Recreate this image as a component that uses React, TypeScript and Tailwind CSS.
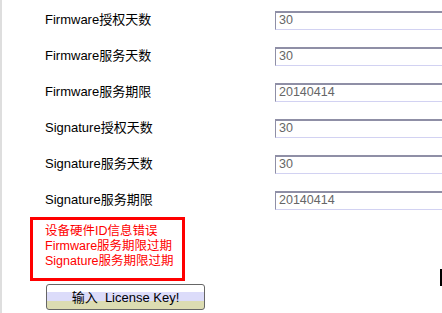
import React from "react";

const rows = [
  { label: "Firmware授权天数", value: "30" },
  { label: "Firmware服务天数", value: "30" },
  { label: "Firmware服务期限", value: "20140414" },
  { label: "Signature授权天数", value: "30" },
  { label: "Signature服务天数", value: "30" },
  { label: "Signature服务期限", value: "20140414" },
];

const errors = ["设备硬件ID信息错误", "Firmware服务期限过期", "Signature服务期限过期"];

const font = { fontFamily: '"Liberation Sans", Arial, "Noto Sans CJK SC", sans-serif' };

export default function App() {
  return (
    <div
      className="relative w-[442px] h-[313px] overflow-hidden bg-white border-l-2 border-[#dedede]"
      style={font}
    >
      <div className="pt-[2px]">
        {rows.map((r) => (
          <div key={r.label} className="flex items-center h-9">
            <div className="w-[273px] shrink-0 pl-[43px] text-[13px] text-black">{r.label}</div>
            <div className="w-[200px] h-[19px] shrink-0 flex items-center pl-[3px] border-t-2 border-l border-t-[#8f8fa6] border-l-[#8f8fa6] border-b border-r border-b-[#d2d2f2] border-r-[#d2d2f2] text-[12.5px] text-[#666]">
              {r.value}
            </div>
          </div>
        ))}
      </div>

      <div className="ml-[28px] mt-[-1px] w-[155px] h-[64px] border-[3px] border-[#ff0000] pl-[12px] pt-[4px] text-[12.5px] leading-[15px] text-[#ff0000]">
        {errors.map((e) => (
          <div key={e}>{e}</div>
        ))}
      </div>

      <button className="ml-[44px] mt-[3px] w-[159px] h-[26px] rounded-[3px] border border-[#666] bg-[linear-gradient(to_bottom,#ffffff_0,#ffffff_30%,#dcdcfa_30%,#dcdcfa_66%,#dcdcb2_66%)] text-[13px] text-black flex items-center justify-center pt-[1px]">
        输入&nbsp;&nbsp;License Key!
      </button>

      <div className="absolute left-[438px] top-[269px] w-[2px] h-[17px] bg-black" />
    </div>
  );
}
